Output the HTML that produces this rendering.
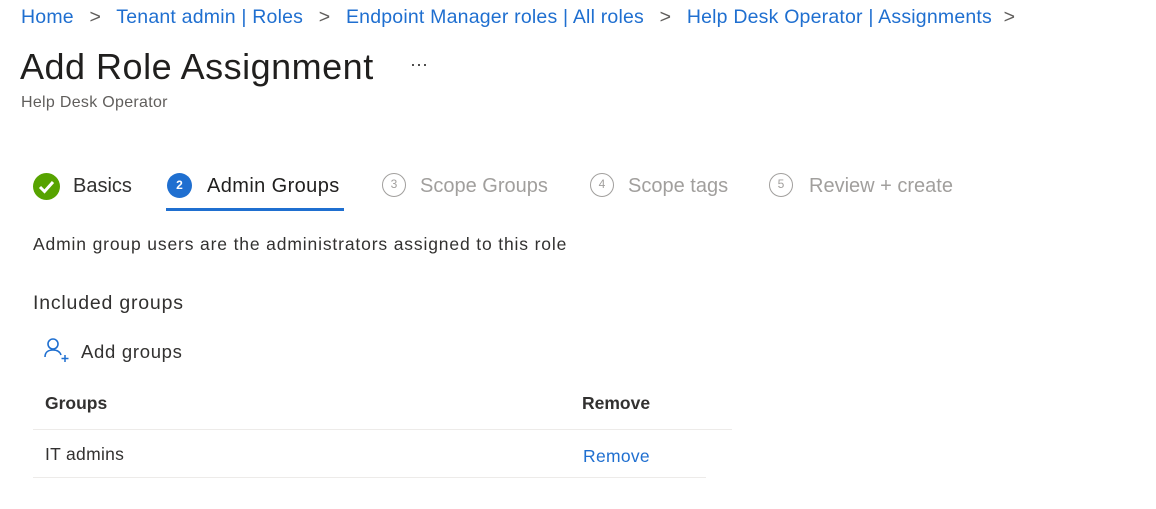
<!DOCTYPE html>
<html><head><style>
body{margin:0;width:1156px;height:509px;background:#fff;font-family:"Liberation Sans",sans-serif;position:relative;overflow:hidden;color:#323130}
.a{position:absolute;white-space:nowrap}
.bl{color:#1f6fd0}
.gr{color:#a19f9d}
.circ{position:absolute;width:24px;height:24px;border-radius:50%;box-sizing:border-box;border:1.5px solid #a19f9d;color:#a19f9d;font-size:12px;text-align:center;line-height:21px}
</style></head><body>
<div class="a bl" style="left:21px;top:6px;font-size:19.5px;letter-spacing:0.2px">Home <span style="color:#605e5c;margin:0 10px">&gt;</span> Tenant admin | Roles <span style="color:#605e5c;margin:0 10px">&gt;</span> Endpoint Manager roles | All roles <span style="color:#605e5c;margin:0 10px">&gt;</span> Help Desk Operator | Assignments <span style="color:#605e5c;margin:0 6px">&gt;</span></div>
<div class="a" style="left:20px;top:46px;font-size:36px;letter-spacing:0.5px;color:#201f1e">Add Role Assignment</div>
<div class="a" style="left:410px;top:54px;font-size:18px">···</div>
<div class="a" style="left:21px;top:94px;font-size:16px;letter-spacing:0.3px;color:#605e5c">Help Desk Operator</div>

<div style="position:absolute;left:33px;top:173px;width:27px;height:27px;border-radius:50%;background:#57a300"><svg width="27" height="27"><path d="M7 14l4.5 4.5L20 9" stroke="#fff" stroke-width="3" fill="none"/></svg></div>
<div class="a" style="left:73px;top:175px;font-size:20px">Basics</div>
<div class="circ" style="left:167px;top:173px;background:#1f6fd0;border:none;color:#fff;font-weight:bold;line-height:25px;width:25px;height:25px">2</div>
<div class="a" style="left:207px;top:175px;font-size:20px;letter-spacing:0.4px;color:#201f1e">Admin Groups</div>
<div style="position:absolute;left:166px;top:208px;width:178px;height:3px;background:#1f6fd0"></div>
<div class="circ" style="left:382px;top:173px">3</div>
<div class="a gr" style="left:420px;top:175px;font-size:20px">Scope Groups</div>
<div class="circ" style="left:590px;top:173px">4</div>
<div class="a gr" style="left:628px;top:175px;font-size:20px">Scope tags</div>
<div class="circ" style="left:769px;top:173px">5</div>
<div class="a gr" style="left:809px;top:175px;font-size:20px">Review + create</div>

<div class="a" style="left:33px;top:234px;font-size:17.5px;letter-spacing:0.85px">Admin group users are the administrators assigned to this role</div>
<div class="a" style="left:33px;top:292px;font-size:19.5px;letter-spacing:0.8px">Included groups</div>
<svg class="a" style="left:44px;top:338px" width="28" height="26"><circle cx="9" cy="6" r="5" stroke="#1f6fd0" stroke-width="1.6" fill="none"/><path d="M1 19c0-5 3.5-7 8-7s7 2 8 5" stroke="#1f6fd0" stroke-width="1.6" fill="none"/><path d="M21 17v7M17.5 20.5h7" stroke="#1f6fd0" stroke-width="1.5"/></svg>
<div class="a" style="left:81px;top:341px;font-size:18.5px;letter-spacing:0.7px">Add groups</div>
<div class="a" style="left:45px;top:393px;font-size:17.5px;font-weight:bold">Groups</div>
<div class="a" style="left:582px;top:393px;font-size:17.5px;font-weight:bold">Remove</div>
<div style="position:absolute;left:33px;top:429px;width:699px;height:1px;background:#edebe9"></div>
<div class="a" style="left:45px;top:444px;font-size:17.5px;letter-spacing:0.3px">IT admins</div>
<div class="a bl" style="left:583px;top:446px;font-size:17.5px;letter-spacing:0.3px">Remove</div>
<div style="position:absolute;left:33px;top:477px;width:673px;height:1px;background:#edebe9"></div>
</body></html>
